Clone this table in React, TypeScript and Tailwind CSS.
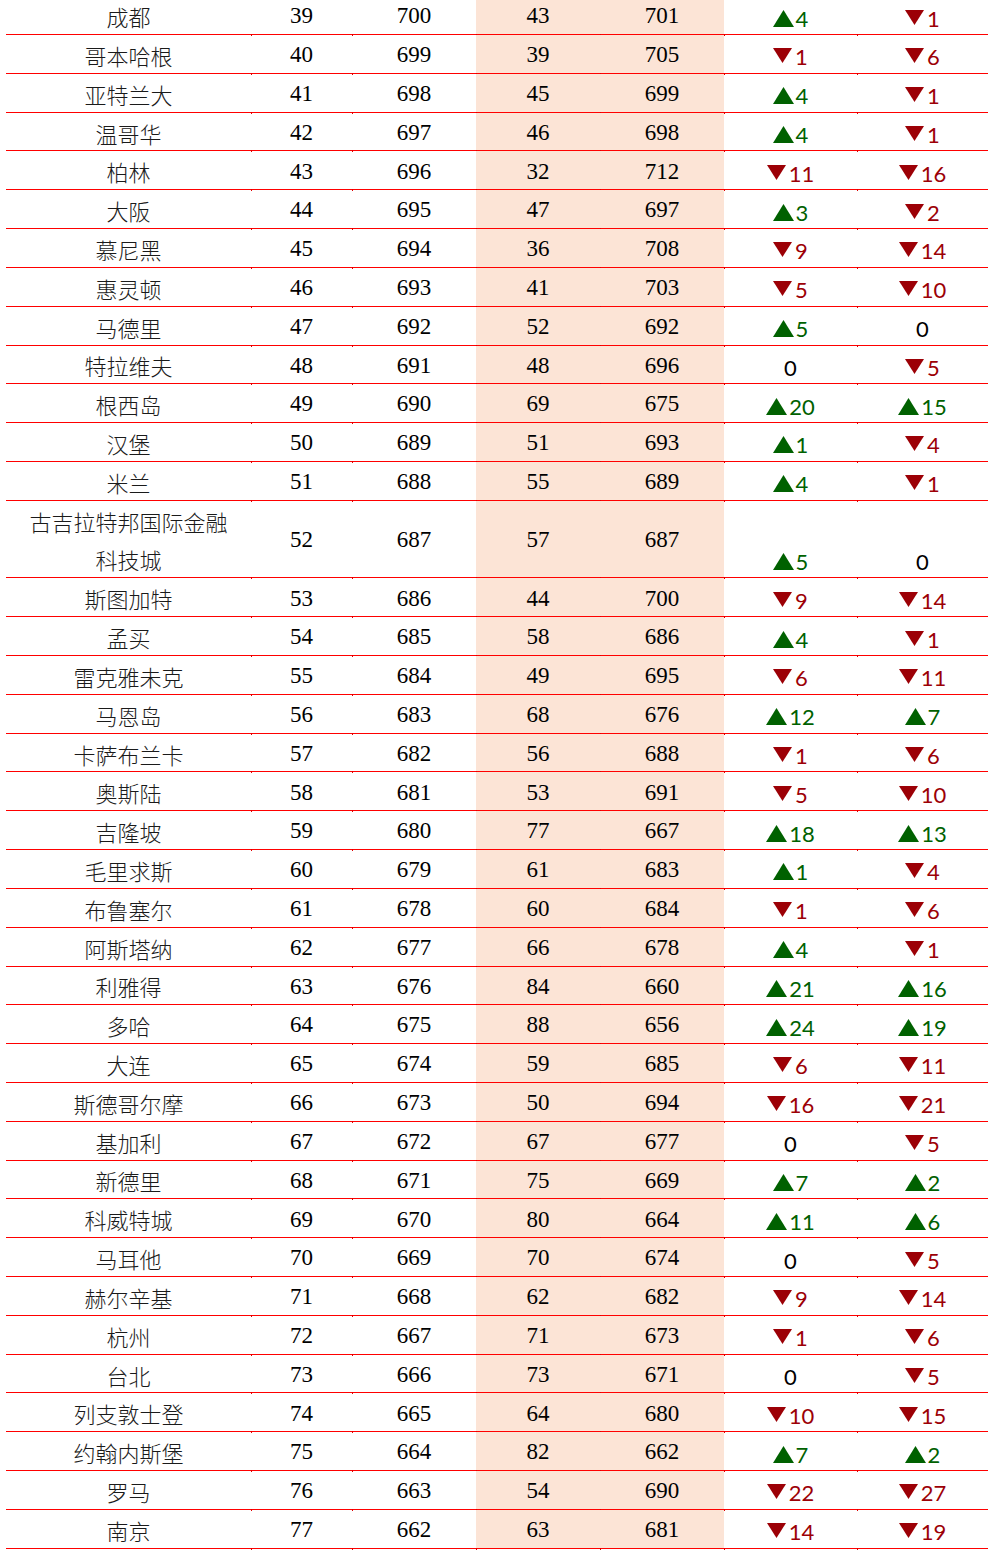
import React from "react";

type Row = [string, number, number, number, number, string, string];

const rows: Row[] = [
  ["成都", 39, 700, 43, 701, "u4", "d1"],
  ["哥本哈根", 40, 699, 39, 705, "d1", "d6"],
  ["亚特兰大", 41, 698, 45, 699, "u4", "d1"],
  ["温哥华", 42, 697, 46, 698, "u4", "d1"],
  ["柏林", 43, 696, 32, 712, "d11", "d16"],
  ["大阪", 44, 695, 47, 697, "u3", "d2"],
  ["慕尼黑", 45, 694, 36, 708, "d9", "d14"],
  ["惠灵顿", 46, 693, 41, 703, "d5", "d10"],
  ["马德里", 47, 692, 52, 692, "u5", "0"],
  ["特拉维夫", 48, 691, 48, 696, "0", "d5"],
  ["根西岛", 49, 690, 69, 675, "u20", "u15"],
  ["汉堡", 50, 689, 51, 693, "u1", "d4"],
  ["米兰", 51, 688, 55, 689, "u4", "d1"],
  ["古吉拉特邦国际金融\n科技城", 52, 687, 57, 687, "u5", "0"],
  ["斯图加特", 53, 686, 44, 700, "d9", "d14"],
  ["孟买", 54, 685, 58, 686, "u4", "d1"],
  ["雷克雅未克", 55, 684, 49, 695, "d6", "d11"],
  ["马恩岛", 56, 683, 68, 676, "u12", "u7"],
  ["卡萨布兰卡", 57, 682, 56, 688, "d1", "d6"],
  ["奥斯陆", 58, 681, 53, 691, "d5", "d10"],
  ["吉隆坡", 59, 680, 77, 667, "u18", "u13"],
  ["毛里求斯", 60, 679, 61, 683, "u1", "d4"],
  ["布鲁塞尔", 61, 678, 60, 684, "d1", "d6"],
  ["阿斯塔纳", 62, 677, 66, 678, "u4", "d1"],
  ["利雅得", 63, 676, 84, 660, "u21", "u16"],
  ["多哈", 64, 675, 88, 656, "u24", "u19"],
  ["大连", 65, 674, 59, 685, "d6", "d11"],
  ["斯德哥尔摩", 66, 673, 50, 694, "d16", "d21"],
  ["基加利", 67, 672, 67, 677, "0", "d5"],
  ["新德里", 68, 671, 75, 669, "u7", "u2"],
  ["科威特城", 69, 670, 80, 664, "u11", "u6"],
  ["马耳他", 70, 669, 70, 674, "0", "d5"],
  ["赫尔辛基", 71, 668, 62, 682, "d9", "d14"],
  ["杭州", 72, 667, 71, 673, "d1", "d6"],
  ["台北", 73, 666, 73, 671, "0", "d5"],
  ["列支敦士登", 74, 665, 64, 680, "d10", "d15"],
  ["约翰内斯堡", 75, 664, 82, 662, "u7", "u2"],
  ["罗马", 76, 663, 54, 690, "d22", "d27"],
  ["南京", 77, 662, 63, 681, "d14", "d19"],
];

const cjk = { fontFamily: '"Noto Sans CJK SC", "Noto Sans", sans-serif' };
const serif = { fontFamily: '"Liberation Serif", "Times New Roman", serif' };
const sans = { fontFamily: 'Lato, "Open Sans", sans-serif' };

function Tick() {
  return <span className="absolute right-[-1px] top-full w-px h-[2px] bg-[#e00000]" />;
}

function Change({ v }: { v: string }) {
  if (v === "0") {
    return <span className="text-black">0</span>;
  }
  const up = v[0] === "u";
  const n = v.slice(1);
  return (
    <span className={up ? "text-[#006100]" : "text-[#9c0006]"}>
      {up ? (
        <svg width="21" height="17" viewBox="0 0 21 17" className="inline-block align-baseline mr-[2px]">
          <polygon points="10.5,0 21,17 0,17" fill="#006100" />
        </svg>
      ) : (
        <svg width="19" height="15" viewBox="0 0 19 15" className="inline-block align-baseline mb-[2px] mr-[3px]">
          <polygon points="0,0 19,0 9.5,15" fill="#9c0006" />
        </svg>
      )}
      {n}
    </span>
  );
}

const numCell = "relative flex items-center justify-center text-[23px] leading-none text-black pt-[1.5px]";

export default function App() {
  return (
    <div className="w-[996px] h-[1555px] bg-white overflow-hidden">
      <div className="ml-[6px] w-[982px] mt-[-3.82px] flex flex-col">
        {rows.map((r, i) => {
          const double = r[0].includes("\n");
          const h = double ? "h-[77.64px]" : "h-[38.82px]";
          return (
            <div key={i} className={`flex ${h} border-b border-[#ff0000]`}>
              <div
                className="relative w-[245px] flex items-center justify-center text-center text-[22px] font-light leading-[38px] text-[#1a1a1a] pt-[2px] whitespace-pre-line"
                style={cjk}
              >
                {r[0]}
                <Tick />
              </div>
              <div className={`w-[101px] ${numCell}`} style={serif}>
                {r[1]}
                <Tick />
              </div>
              <div className={`w-[124px] ${numCell}`} style={serif}>
                {r[2]}
                <Tick />
              </div>
              <div className={`w-[124px] bg-[#fce4d6] ${numCell}`} style={serif}>
                {r[3]}
                <Tick />
              </div>
              <div className={`w-[124px] bg-[#fce4d6] ${numCell}`} style={serif}>
                {r[4]}
                <Tick />
              </div>
              <div className="relative w-[133px] flex items-end justify-center text-[22px] leading-none pb-[4.5px]" style={sans}>
                <Change v={r[5]} />
                <Tick />
              </div>
              <div className="relative w-[131px] flex items-end justify-center text-[22px] leading-none pb-[4.5px]" style={sans}>
                <Change v={r[6]} />
              </div>
            </div>
          );
        })}
      </div>
    </div>
  );
}
